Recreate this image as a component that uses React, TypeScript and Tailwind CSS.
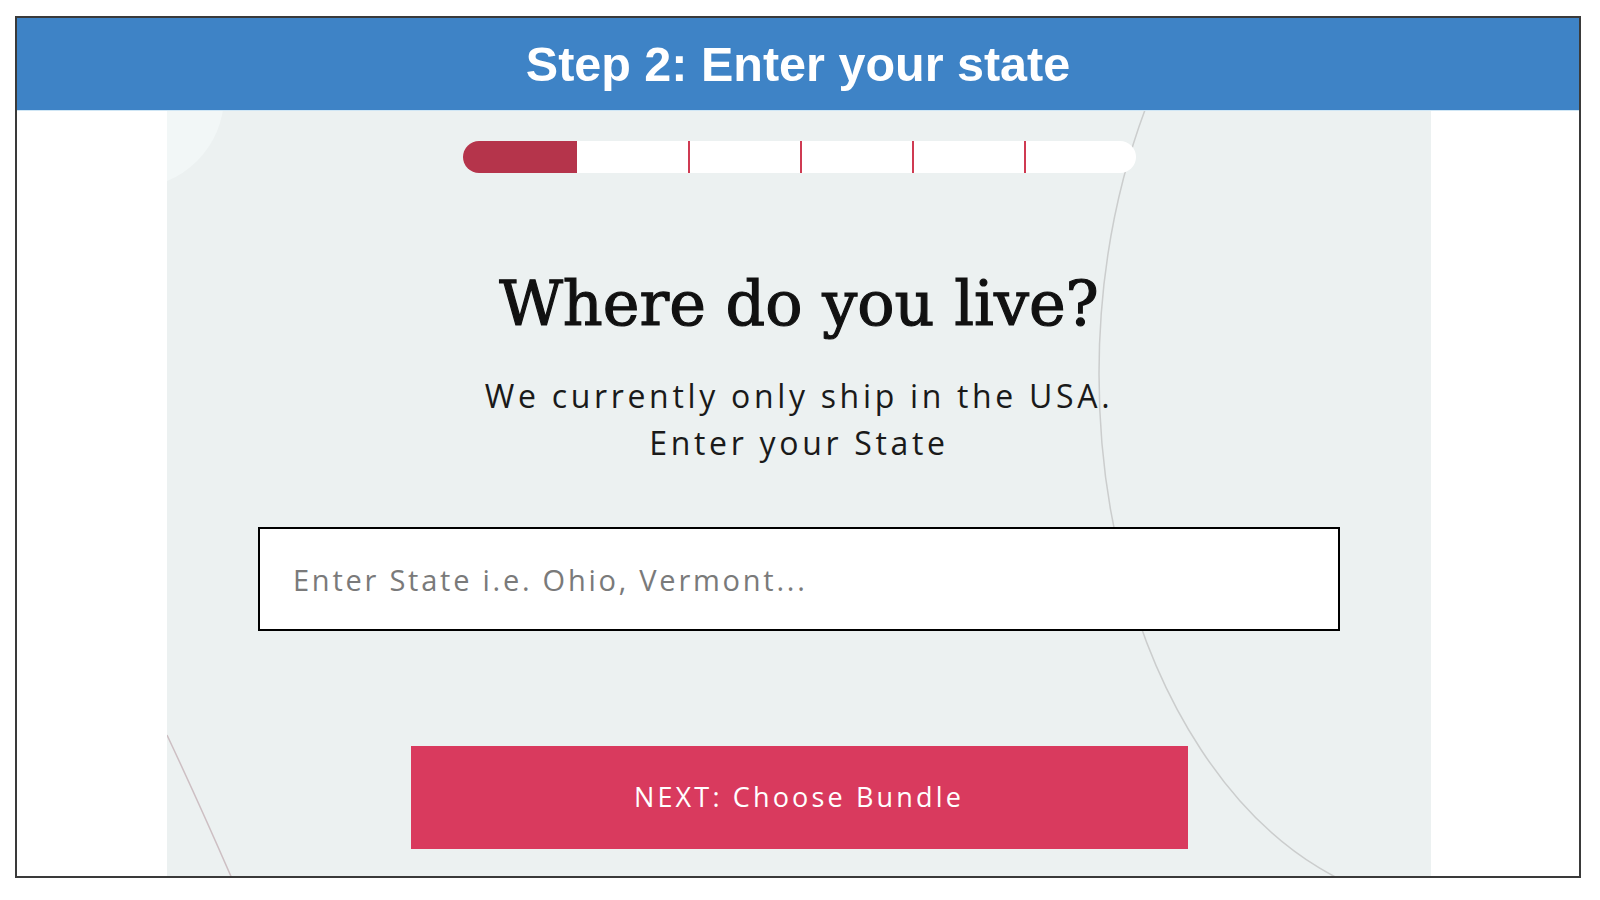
import React from "react";

export default function App() {
  return (
    <div className="w-[1600px] h-[900px] bg-white overflow-hidden">
      <div className="ml-[15px] mt-[16px] w-[1566px] h-[862px] border-2 border-[#3a3a3a] flex flex-col">
        <div className="h-[93px] shrink-0 bg-[#3e83c6] border-b border-[#cfe6f5] flex items-center justify-center">
          <h2 className="font-['Liberation_Sans',Arial,sans-serif] font-bold text-white text-[48.5px] leading-none">
            Step 2: Enter your state
          </h2>
        </div>
        <div className="flex-1 flex">
          <div className="relative ml-[150px] w-[1264px] h-full bg-[#ecf1f1] overflow-hidden">
            <svg className="absolute inset-0" width="1264" height="770" viewBox="0 0 1264 770">
              <circle cx="-35" cy="-15" r="92" fill="#f2f7f7" />
              <ellipse cx="1280" cy="263" rx="348" ry="531" fill="none" stroke="#cbcdcd" strokeWidth="1.5" />
              <path d="M0 624 Q32 692 66 770" fill="none" stroke="#cdbfc3" strokeWidth="1.5" />
            </svg>
            <div className="relative flex flex-col items-center pt-[30px]">
              <div className="flex w-[673px] h-[32px] rounded-full bg-white overflow-hidden">
                <div className="w-[114px] bg-[#b5344b]" />
                <div className="w-[111px]" />
                <div className="w-[2px] bg-[#cf3a52]" />
                <div className="w-[110px]" />
                <div className="w-[2px] bg-[#cf3a52]" />
                <div className="w-[110px]" />
                <div className="w-[2px] bg-[#cf3a52]" />
                <div className="w-[110px]" />
                <div className="w-[2px] bg-[#cf3a52]" />
                <div className="flex-1" />
              </div>
              <h1 className="mt-[100px] font-['DejaVu_Serif',serif] text-[62px] leading-none text-[#111111] [-webkit-text-stroke:1.2px_#111111]">
                Where do you live?
              </h1>
              <p className="mt-[37px] font-['Open_Sans',sans-serif] text-[32px] leading-[47px] tracking-[0.115em] text-[#1a1a1a] text-center">
                We currently only ship in the USA.
                <br />
                Enter your State
              </p>
              <input
                type="text"
                placeholder="Enter State i.e. Ohio, Vermont..."
                className="mt-[61px] w-[1082px] h-[104px] border-2 border-black bg-white pl-[33px] font-['Open_Sans',sans-serif] text-[29px] tracking-[0.095em] text-[#333] placeholder:text-[#7a7a7a] outline-none"
              />
              <button className="mt-[115px] w-[777px] h-[103px] bg-[#d93a5e] text-white font-['Open_Sans',sans-serif] text-[27px] tracking-[0.117em]">
                NEXT: Choose Bundle
              </button>
            </div>
          </div>
        </div>
      </div>
    </div>
  );
}
